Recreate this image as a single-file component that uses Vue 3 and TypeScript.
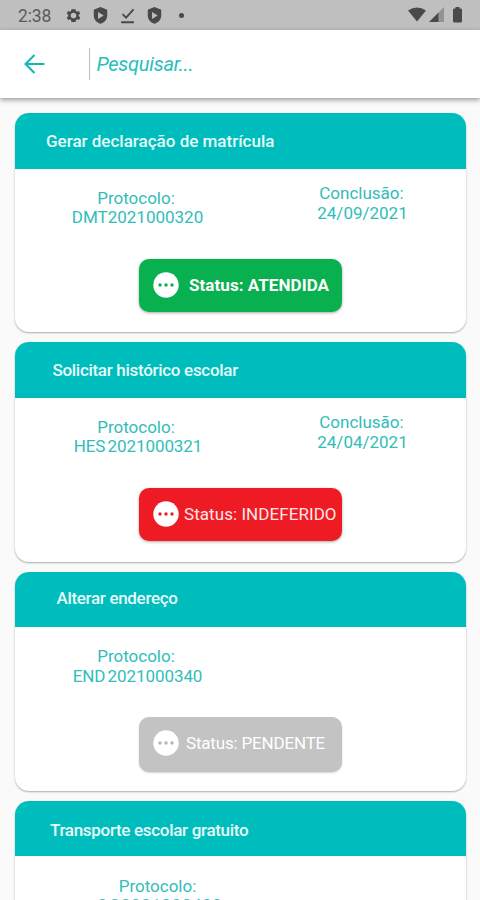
<script setup lang="ts">
interface Request {
  kind: string
  title: string
  protocol: string
  finished?: string
  status?: string
}

const requests: Request[] = [
  { kind: 'enrollment', title: 'Gerar declaração de matrícula', protocol: 'DMT2021000320', finished: '24/09/2021', status: 'ATENDIDA' },
  { kind: 'history', title: 'Solicitar histórico escolar', protocol: 'HES 2021000321', finished: '24/04/2021', status: 'INDEFERIDO' },
  { kind: 'address', title: 'Alterar endereço', protocol: 'END 2021000340', status: 'PENDENTE' },
  { kind: 'transport', title: 'Transporte escolar gratuito', protocol: 'OG2021000400' },
]
</script>

<template>
  <main class="screen">
    <div class="statusbar">
      <span class="clock">2:38</span>
      <svg class="gear" viewBox="0 0 24 24"><path fill-rule="evenodd" d="M19.4 13a7.5 7.5 0 0 0 0-2l2.1-1.7-2-3.5-2.5 1a8 8 0 0 0-1.7-1L15 3H9l-.4 2.8a8 8 0 0 0-1.7 1l-2.500-1-2 3.500L4.600 11a7.500 7.500 0 0 0 0 2l-2.200 1.700 2 3.500 2.500-1a8 8 0 0 0 1.700 1L9 21h6l.4-2.800a8 8 0 0 0 1.700-1l2.500 1 2-3.500zM12 16a4 4 0 1 1 0-8 4 4 0 0 1 0 8z" /></svg>
      <svg class="shield" viewBox="0 0 24 24"><path fill-rule="evenodd" d="M12 0 2.500 4v8c0 5.500 4 10 9.500 11.500 5.500-1.500 9.500-6 9.500-11.500V4zM8.500 7v10l8-5z" /></svg>
      <svg class="check" viewBox="0 0 24 24"><path d="M3 21.500h18M5 10l5 5L20.500 3.500" fill="none" stroke="#494949" stroke-width="2.700" /></svg>
      <svg class="shield" viewBox="0 0 24 24"><path fill-rule="evenodd" d="M12 0 2.500 4v8c0 5.500 4 10 9.500 11.500 5.500-1.500 9.500-6 9.500-11.500V4zM8.500 7v10l8-5z" /></svg>
      <i class="dot"></i>
      <svg class="system" viewBox="0 0 56 18">
        <path d="M1 4.500Q10-1.500 19 4.500L10 15.500z" />
        <path d="M22 16 31.500 6.500V16z" />
        <path d="M31.500 6.500 37 1v15h-5.500z" opacity=".38" />
        <path d="M48.500 1h4v1.500h1.200q1.300 0 1.300 1.300v11.400q0 1.300-1.300 1.300h-6.400q-1.300 0-1.300-1.300V3.800q0-1.300 1.300-1.300h1.200z" />
      </svg>
    </div>

    <header class="toolbar">
      <svg class="back" viewBox="0 0 22 22"><path d="M20.500 11H2M10.500 2l-9 9 9 9" fill="none" stroke="#10b9b7" stroke-width="2.100" /></svg>
      <div class="search"><span>Pesquisar...</span></div>
    </header>

    <section class="list">
      <article v-for="request in requests" :key="request.kind" class="card" :class="request.kind">
        <h2><span>{{ request.title }}</span></h2>
        <div class="details">
          <div class="protocol"><span class="label">Protocolo:</span><span class="number">{{ request.protocol }}</span></div>
          <div v-if="request.finished" class="finished"><span class="done">Conclusão:</span><span class="date">{{ request.finished }}</span></div>
        </div>
        <button v-if="request.status" type="button">
          <svg viewBox="0 0 26 26"><circle cx="13" cy="13" r="12.700" fill="#fff" /><g class="dots"><circle cx="7" cy="13" r="1.700" /><circle cx="13" cy="13" r="1.700" /><circle cx="19" cy="13" r="1.700" /></g></svg>
          <span>Status: {{ request.status }}</span>
        </button>
      </article>
    </section>
  </main>
</template>

<style>
body { margin: 0; overflow: hidden; }
</style>

<style scoped>
* { box-sizing: border-box; }
.screen { width: 480px; height: 900px; overflow: hidden; background: #fafafa; font-family: Roboto, sans-serif; }
.statusbar { height: 30px; background: #bfbfbf; display: flex; align-items: center; padding: 0 17px 0 18px; }
.statusbar svg { fill: #494949; flex: none; }
.clock { color: #5a5a5a; font-size: 17.500px; letter-spacing: -.1px; width: 47px; line-height: 30px; padding-top: 1px; }
.gear, .shield, .check { width: 17px; height: 17px; margin-right: 10px; }
.dot { width: 5px; height: 5px; border-radius: 50%; background: #494949; margin-left: 6px; }
.system { width: 56px; height: 18px; margin-left: auto; }
.toolbar { position: relative; height: 67.500px; background: #fff; display: flex; align-items: center; padding-left: 24px; box-shadow: 0 2px 5px rgba(0,0,0,.38); }
.back { width: 22px; height: 22px; }
.search { margin-left: 42.500px; border-left: 1px solid #bdbdbd; height: 32px; line-height: 32px; padding-left: 7px; font-size: 20px; font-style: italic; color: #27bfbc; }
.search span { letter-spacing: -.28px; }
.list { padding: 15.500px 14px 0 15px; display: flex; flex-direction: column; gap: 10px; }
.card { flex: none; height: 219.300px; background: #fff; border-radius: 14px; box-shadow: 0 1px 2px rgba(0,0,0,.32); overflow: hidden; }
h2 { margin: 0; height: 55.500px; background: #00bdbd; color: #e6fafa; font-weight: 500; font-size: 17px; line-height: 56px; padding-left: 31px; white-space: nowrap; }
.history h2 { padding-left: 37.500px; letter-spacing: -.3px; }
.address h2 { padding-left: 41.500px; line-height: 53px; letter-spacing: -.32px; }
.transport h2 { padding-left: 35px; line-height: 58px; letter-spacing: -.31px; }
.details { display: flex; height: 90px; color: #32bdb9; font-size: 17px; line-height: 19.500px; text-align: center; }
.details span { display: block; white-space: nowrap; }
.protocol { width: 242px; padding-top: 20px; }
.protocol .number { padding-left: 3px; word-spacing: -2px; }
.history .number { padding-left: 4px; letter-spacing: -.07px; }
.address .number { letter-spacing: -.07px; }
.finished { width: 209px; padding-top: 15px; }
.finished .date { padding-left: 2px; line-height: 20.500px; }
.transport .protocol { width: 285px; padding-top: 21px; }
.transport .number { padding-left: 4px; letter-spacing: .6px; line-height: 16px; }
button { width: 203px; height: 53px; margin-left: 124px; border: 0; border-radius: 10px; background: #08b04f; display: flex; align-items: center; padding: 0 0 0 14px; color: #fff; font: 700 17px Roboto, sans-serif; box-shadow: 0 1px 3px rgba(0,0,0,.35); white-space: nowrap; }
button svg { width: 26px; height: 26px; flex: none; margin-right: 10px; fill: #08b04f; }
.enrollment button span { letter-spacing: .06px; }
.history button { background: #ee1b24; font-weight: 400; color: #ffe6e7; }
.history button svg { fill: #ee1b24; margin-right: 5px; }
.history button span { letter-spacing: .06px; }
.address button { height: 55px; padding-bottom: 3px; background: #c3c3c3; font-weight: 400; box-shadow: 0 1px 2px rgba(0,0,0,.18); letter-spacing: -.18px; }
.address button svg { fill: #b5b5b5; margin-right: 7px; }
</style>
